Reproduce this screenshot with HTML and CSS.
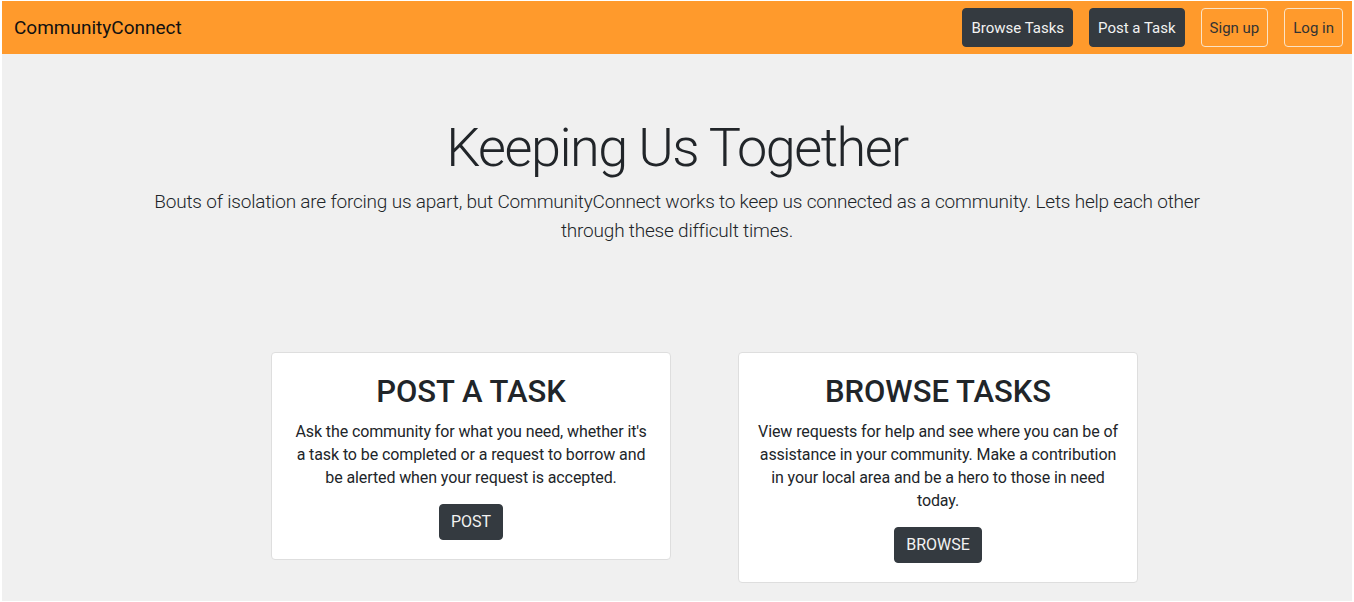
FILE: index.html
```html
<!DOCTYPE html>
<html lang="en">
<head>
<meta charset="utf-8">
<title>CommunityConnect</title>
<link rel="stylesheet" href="styles.css">
</head>
<body>
<div class="page">
  <nav class="navbar">
    <a class="brand" href="#">CommunityConnect</a>
    <div class="nav-actions">
      <a class="btn btn-dark" href="#">Browse Tasks</a>
      <a class="btn btn-dark" href="#">Post a Task</a>
      <a class="btn btn-outline" href="#">Sign up</a>
      <a class="btn btn-outline" href="#">Log in</a>
    </div>
  </nav>
  <section class="hero">
    <h1 class="hero-title">Keeping Us Together</h1>
    <p class="hero-lead">Bouts of isolation are forcing us apart, but CommunityConnect works to keep us connected as a community. Lets help each other through these difficult times.</p>
  </section>
  <section class="cards">
    <div class="card">
      <h2 class="card-title">POST A TASK</h2>
      <p class="card-text">Ask the community for what you need, whether it's a task to be completed or a request to borrow and be alerted when your request is accepted.</p>
      <a class="btn btn-dark btn-card" href="#">POST</a>
    </div>
    <div class="card">
      <h2 class="card-title">BROWSE TASKS</h2>
      <p class="card-text">View requests for help and see where you can be of assistance in your community. Make a contribution in your local area and be a hero to those in need today.</p>
      <a class="btn btn-dark btn-card" href="#">BROWSE</a>
    </div>
  </section>
</div>
</body>
</html>
```
FILE: styles.css
```css
* { box-sizing: border-box; }
html, body { height: 100%; }
body {
  margin: 0;
  padding: 1px 2px 1px 2px;
  background: #ffffff;
  font-family: Roboto, "Liberation Sans", sans-serif;
  color: #212529;
}
.page {
  min-height: 100%;
  background: #f0f0f0;
}
.navbar {
  display: flex;
  align-items: center;
  justify-content: space-between;
  height: 53px;
  padding: 0 9px 0 12px;
  background: #ff9a2c;
}
.brand {
  font-size: 19px;
  color: #111;
  text-decoration: none;
}
.nav-actions {
  display: flex;
  gap: 16px;
}
.btn {
  display: inline-flex;
  align-items: center;
  justify-content: center;
  height: 39px;
  padding: 0 8px;
  font-size: 15px;
  border-radius: 4px;
  text-decoration: none;
  border: 1px solid transparent;
}
.btn-dark {
  background: #343a40;
  color: #f2f2f2;
  border-color: #343a40;
}
.btn-outline {
  color: #333;
  border-color: #fbe3c6;
}
.hero {
  text-align: center;
  padding-top: 62px;
  max-width: 1110px;
  margin: 0 auto;
}
.hero-title {
  margin: 0;
  font-size: 54px;
  font-weight: 300;
  line-height: 1.2;
  letter-spacing: -1.5px;
  color: #212529;
}
.hero-lead {
  margin: 6px 0 0;
  font-size: 19px;
  font-weight: 300;
  line-height: 29px;
  letter-spacing: -0.2px;
}
.cards {
  display: flex;
  justify-content: center;
  align-items: flex-start;
  gap: 67px;
  padding-left: 55px;
  margin-top: 107px;
}
.card {
  width: 400px;
  background: #fff;
  border: 1px solid #dedede;
  border-radius: 4px;
  padding: 20px 18px 19px;
  text-align: center;
}
.card-title {
  margin: 0 0 10px;
  font-size: 31px;
  font-weight: 500;
  line-height: 1.2;
}
.card-text {
  margin: 0 0 15px;
  font-size: 16px;
  line-height: 23px;
  letter-spacing: -0.1px;
}
.btn-card {
  height: 36px;
  padding: 0 11px;
  font-size: 16px;
}
```
